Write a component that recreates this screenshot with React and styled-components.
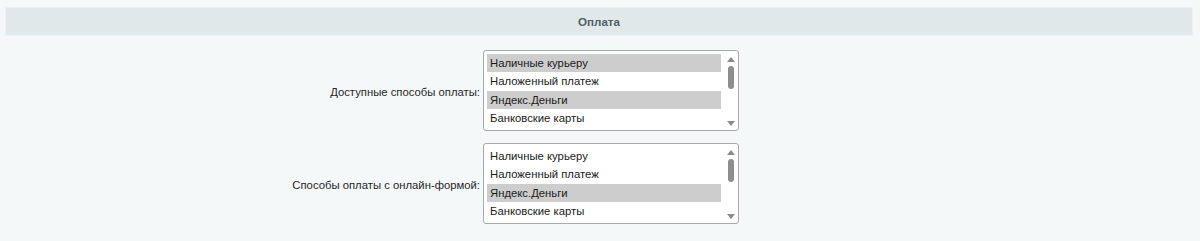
import React from 'react'
import styled, { createGlobalStyle } from 'styled-components'

const GlobalStyle = createGlobalStyle`
  html, body {
    margin: 0;
    padding: 0;
    background: #f4f8f9;
  }
  body {
    font-family: "Liberation Sans", Arial, sans-serif;
    font-size: 12px;
    color: #222;
  }
`

const Page = styled.div`
  width: 1200px;
  height: 241px;
  padding: 7px 7px 0 5px;
  box-sizing: border-box;
  overflow: hidden;
`

const SectionHeader = styled.div`
  height: 29px;
  box-sizing: border-box;
  display: flex;
  align-items: center;
  justify-content: center;
  background: #e1e8ea;
  border: 1px solid #edf1f2;
  font-weight: bold;
  font-size: 11.6px;
  color: #505f65;
`

const Form = styled.div`
  display: grid;
  grid-template-columns: 475px 256px;
  column-gap: 3px;
  row-gap: 12px;
  align-items: center;
  padding-top: 14px;
`

const Label = styled.div`
  text-align: right;
  font-size: 11.3px;
  color: #262626;
  padding-top: 2px;
`

const ListBox = styled.div`
  width: 256px;
  height: 81px;
  box-sizing: border-box;
  border: 1px solid #a9a9a9;
  border-radius: 3px;
  background: #fff;
  display: flex;
  overflow: hidden;
`

const Options = styled.div`
  width: 234px;
  padding: 3px 0 0 3px;
  flex: none;
`

const Option = styled.div`
  height: 18.4px;
  line-height: 18.4px;
  padding-left: 3px;
  font-size: 11.3px;
  color: #1a1a1a;
  white-space: nowrap;
  background: ${p => (p.$selected ? '#cdcdcd' : 'transparent')};
`

const ScrollTrack = styled.div`
  margin-left: auto;
  width: 15px;
  display: flex;
  flex-direction: column;
  align-items: center;
  padding: 6px 0 4px;
  box-sizing: border-box;
`

const Thumb = styled.div`
  width: 6px;
  height: 23px;
  border-radius: 3px;
  background: #8e8e8e;
  margin-top: 4px;
`

const Spacer = styled.div`
  flex: 1;
`

const Arrow = ({ down }) => (
  <svg width="8" height="5" viewBox="0 0 8 5">
    <path d={down ? 'M0 0 H8 L4 5 Z' : 'M0 5 H8 L4 0 Z'} fill="#8a8a8a" />
  </svg>
)

const methods = [
  'Наличные курьеру',
  'Наложенный платеж',
  'Яндекс.Деньги',
  'Банковские карты',
]

function MultiList({ selected }) {
  return (
    <ListBox>
      <Options>
        {methods.map((m, i) => (
          <Option key={m} $selected={selected.includes(i)}>{m}</Option>
        ))}
      </Options>
      <ScrollTrack>
        <Arrow />
        <Thumb />
        <Spacer />
        <Arrow down />
      </ScrollTrack>
    </ListBox>
  )
}

export default function App() {
  return (
    <>
      <GlobalStyle />
      <Page>
        <SectionHeader>Оплата</SectionHeader>
        <Form>
          <Label>Доступные способы оплаты:</Label>
          <MultiList selected={[0, 2]} />
          <Label>Способы оплаты с онлайн-формой:</Label>
          <MultiList selected={[2]} />
        </Form>
      </Page>
    </>
  )
}
